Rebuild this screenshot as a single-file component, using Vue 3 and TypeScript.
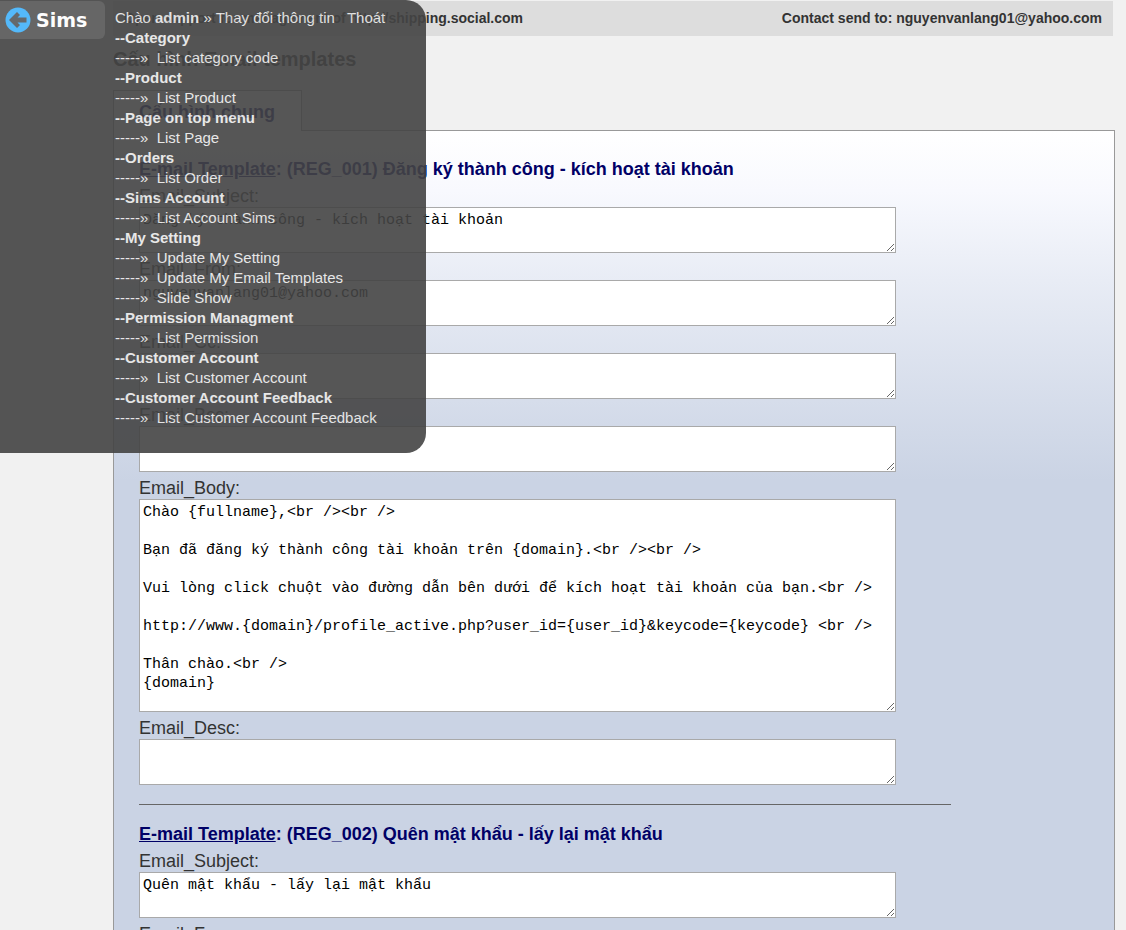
<script setup lang="ts">
import { ref } from 'vue'

interface MenuGroup {
  title: string
  items: string[]
}

interface Field {
  label: string
  value: string
  large?: boolean
}

interface EmailTemplate {
  code: string
  name: string
  fields: Field[]
}

const menuOpen = ref(true)

const menu: MenuGroup[] = [
  { title: 'Category', items: ['List category code'] },
  { title: 'Product', items: ['List Product'] },
  { title: 'Page on top menu', items: ['List Page'] },
  { title: 'Orders', items: ['List Order'] },
  { title: 'Sims Account', items: ['List Account Sims'] },
  { title: 'My Setting', items: ['Update My Setting', 'Update My Email Templates', 'Slide Show'] },
  { title: 'Permission Managment', items: ['List Permission'] },
  { title: 'Customer Account', items: ['List Customer Account'] },
  { title: 'Customer Account Feedback', items: ['List Customer Account Feedback'] },
]

const activationBody = `Chào {fullname},<br /><br />

Bạn đã đăng ký thành công tài khoản trên {domain}.<br /><br />

Vui lòng click chuột vào đường dẫn bên dưới để kích hoạt tài khoản của bạn.<br />

http://www.{domain}/profile_active.php?user_id={user_id}&keycode={keycode} <br />

Thân chào.<br />
{domain}`

const templates = ref<EmailTemplate[]>([
  {
    code: 'REG_001',
    name: 'Đăng ký thành công - kích hoạt tài khoản',
    fields: [
      { label: 'Email_Subject', value: 'Đăng ký thành công - kích hoạt tài khoản' },
      { label: 'Email_From', value: 'nguyenvanlang01@yahoo.com' },
      { label: 'Email_Cc', value: '' },
      { label: 'Email_Bcc', value: '' },
      { label: 'Email_Body', value: activationBody, large: true },
      { label: 'Email_Desc', value: '' },
    ],
  },
  {
    code: 'REG_002',
    name: 'Quên mật khẩu - lấy lại mật khẩu',
    fields: [
      { label: 'Email_Subject', value: 'Quên mật khẩu - lấy lại mật khẩu' },
      { label: 'Email_From', value: '' },
    ],
  },
])
</script>

<template>
  <div class="page">
    <main class="content">
      <header class="topbar">
        <span>Open support for management of http://shipping.social.com</span>
        <span>Contact send to: nguyenvanlang01@yahoo.com</span>
      </header>
      <h1 class="title">Cấu hình Email templates</h1>
      <div class="tabs">
        <a class="tab" href="#general">Cấu hình chung</a>
      </div>
      <form id="general" class="panel">
        <section v-for="t in templates" :key="t.code" class="template">
          <h2 class="heading"><u>E-mail Template</u>: ({{ t.code }}) {{ t.name }}</h2>
          <div v-for="f in t.fields" :key="f.label" class="field">
            <label :for="t.code + f.label">{{ f.label }}:</label>
            <textarea
              :id="t.code + f.label"
              v-model="f.value"
              :class="{ large: f.large }"
              spellcheck="false"
            ></textarea>
          </div>
        </section>
      </form>
    </main>

    <aside class="drawer">
      <button class="toggle" type="button" :aria-expanded="menuOpen" @click="menuOpen = !menuOpen">
        <svg width="26" height="26" viewBox="0 0 26 26" aria-hidden="true">
          <circle cx="13" cy="13" r="12.5" fill="#44b3fb" />
          <path d="M12 5 L4 13 L12 21 L15 18 L12.5 15.5 H21.5 V10.5 H12.5 L15 8 Z" fill="#565b5e" />
        </svg>
        <span>Sims</span>
      </button>
      <nav v-if="menuOpen" class="menu">
        <div class="user">
          Chào <b>admin</b> » <a href="#profile">Thay đổi thông tin</a>
          <a class="logout" href="#logout">Thoát</a>
        </div>
        <template v-for="g in menu" :key="g.title">
          <div class="group">--{{ g.title }}</div>
          <div v-for="item in g.items" :key="item">-----» &nbsp;<a href="#list">{{ item }}</a></div>
        </template>
      </nav>
    </aside>
  </div>
</template>

<style>
body {
  margin: 0;
  background: #f1f1f1;
}
</style>

<style scoped>
.page {
  position: relative;
  height: 100vh;
  overflow: hidden;
  font-family: 'Liberation Sans', Arial, sans-serif;
  color: #333;
}

.content {
  margin: 0 11px 0 113px;
  padding-top: 1px;
}

.topbar {
  display: flex;
  justify-content: space-between;
  margin-right: 2px;
  padding: 0 11px;
  background: #ddd;
  font-size: 14px;
  font-weight: bold;
  line-height: 35px;
}

.title {
  margin: 11px 0 19px;
  font-size: 20px;
  line-height: 24px;
}

.tabs {
  display: flex;
}

.tab {
  box-sizing: border-box;
  height: 41px;
  margin-bottom: -1px;
  padding: 0 26px 0 25px;
  border: 1px solid #999;
  border-bottom: 0;
  background: #fff;
  color: #006;
  font-size: 18px;
  font-weight: bold;
  line-height: 42px;
  text-decoration: none;
}

.panel {
  padding: 27px 25px;
  border: 1px solid #999;
  background: #cad3e4 linear-gradient(#fff, #f8f9fe 60px, #e8ecf5 150px, #cad3e4 350px) no-repeat;
}

.template {
  max-width: 812px;
}

.template + .template {
  margin-top: 19px;
  border-top: 1px solid #666;
  padding-top: 18px;
}

.heading {
  margin: 0;
  color: #006;
  font-size: 18px;
  line-height: 22px;
}

.field {
  padding-top: 5px;
  font-size: 18px;
}

.field label {
  display: block;
  line-height: 22px;
}

textarea {
  display: block;
  box-sizing: border-box;
  width: 757px;
  max-width: 100%;
  height: 46px;
  margin: 0;
  padding: 3px;
  border: 1px solid #a9a9a9;
  border-radius: 0;
  background: #fff;
  color: #000;
  font-family: 'Liberation Mono', monospace;
  font-size: 15px;
  line-height: 19px;
  overflow: auto;
  resize: both;
}

textarea.large {
  height: 213px;
}

.drawer {
  position: absolute;
  top: 0;
  left: 0;
  box-sizing: border-box;
  width: 426px;
  min-height: 453px;
  border-radius: 0 20px 20px 0;
  background: #444;
  color: #fff;
  opacity: 0.9;
}

.toggle {
  position: absolute;
  top: 1px;
  left: 0;
  display: flex;
  align-items: center;
  gap: 5px;
  width: 105px;
  height: 38px;
  padding: 0 0 0 5px;
  border: 0;
  border-radius: 0 6px 6px 0;
  background: #575757;
  color: #fff;
  font-family: 'DejaVu Sans', sans-serif;
  font-size: 19px;
  font-weight: bold;
}

.menu {
  padding: 8px 0 25px 115px;
  color: #e6e6e6;
  font-size: 15px;
  line-height: 20px;
}

.menu a {
  color: inherit;
  text-decoration: none;
}

.menu .logout {
  margin-left: 8px;
  padding-left: 4px;
}

.group {
  font-weight: bold;
}
</style>
